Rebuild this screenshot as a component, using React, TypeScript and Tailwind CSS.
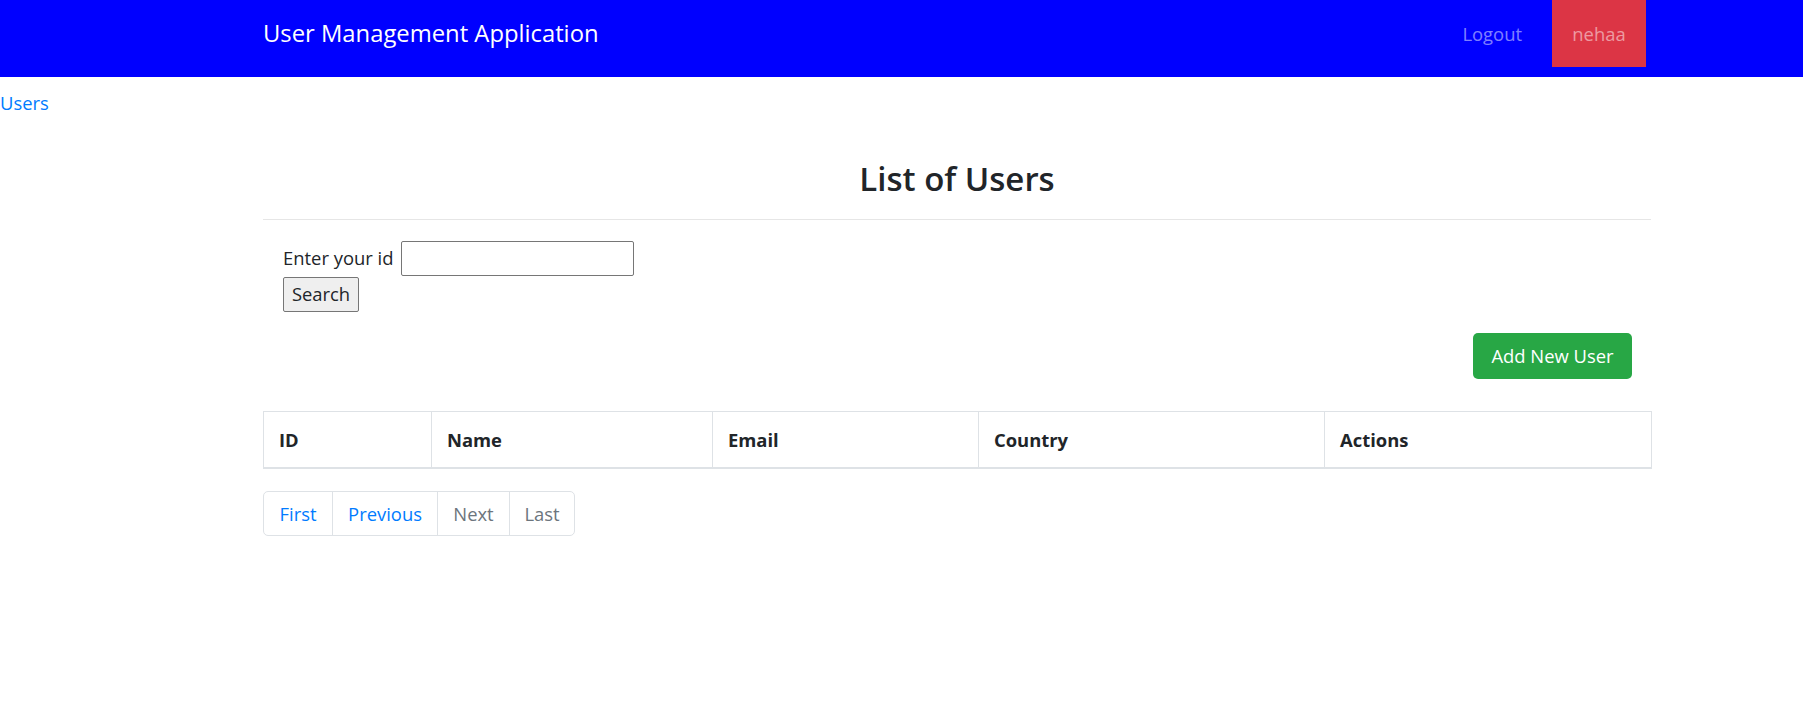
import React from 'react';

const columns = [
  { label: 'ID', width: 'w-[168px]' },
  { label: 'Name', width: 'w-[281px]' },
  { label: 'Email', width: 'w-[266px]' },
  { label: 'Country', width: 'w-[346px]' },
  { label: 'Actions', width: 'w-[327px]' },
];

export default function App() {
  return (
    <div className="min-h-screen bg-white font-['Open_Sans',sans-serif] text-[18.4px] leading-[1.5] text-[#212529]">
      {/* Navbar */}
      <nav className="h-[77px] bg-[#0000ff]">
        <div className="ml-[263px] flex h-[67px] w-[1388px] items-center justify-between">
          <a href="#" className="text-[23.8px] leading-[1.5] text-white">
            User Management Application
          </a>
          <ul className="mr-[5px] flex h-full items-stretch">
            <li className="mr-[30px] flex items-center text-white/50">
              <a href="#">Logout</a>
            </li>
            <li className="flex w-[94px] items-center justify-center bg-[#dc3545] text-white/50">
              <a href="#">nehaa</a>
            </li>
          </ul>
        </div>
      </nav>

      <div className="pt-[12px]">
        <a href="#" className="text-[#007bff]">Users</a>
      </div>

      <div className="ml-[263px] w-[1388px]">
        <h2 className="mt-[40px] text-center text-[33px] font-semibold leading-[44px]">List of Users</h2>
        <hr className="mt-[18px] mb-[21px] border-t border-[#e6e6e6]" />

        {/* Search form */}
        <form className="pl-[20px]">
          <div className="flex items-center">
            <label>Enter your id</label>
            <input
              type="text"
              className="ml-[8px] h-[35px] w-[233px] rounded-[2px] border border-[#767676] bg-white px-1"
            />
          </div>
          <button
            type="button"
            className="mt-px flex h-[35px] w-[76px] items-center justify-center rounded-[2px] border border-[#767676] bg-[#efefef]"
          >
            Search
          </button>
        </form>

        <div className="mt-[21px] flex justify-end pr-[19px]">
          <button className="flex h-[46px] w-[159px] items-center justify-center rounded-[5px] bg-[#28a745] text-white">
            Add New User
          </button>
        </div>

        {/* Users table */}
        <table className="mt-[32px] w-full table-fixed border-collapse">
          <thead>
            <tr>
              {columns.map((c) => (
                <th
                  key={c.label}
                  className={`${c.width} h-[57px] border border-b-2 border-[#dee2e6] px-[15px] text-left align-middle font-bold`}
                >
                  {c.label}
                </th>
              ))}
            </tr>
          </thead>
          <tbody></tbody>
        </table>

        {/* Pagination */}
        <ul className="mt-[22px] flex h-[45px] w-fit rounded-[5px] border border-[#dee2e6]">
          <li className="flex w-[69px] items-center justify-center border-r border-[#dee2e6] text-[#007bff]">First</li>
          <li className="flex w-[105px] items-center justify-center border-r border-[#dee2e6] text-[#007bff]">Previous</li>
          <li className="flex w-[72px] items-center justify-center border-r border-[#dee2e6] text-[#6c757d]">Next</li>
          <li className="flex w-[64px] items-center justify-center text-[#6c757d]">Last</li>
        </ul>
      </div>
    </div>
  );
}
